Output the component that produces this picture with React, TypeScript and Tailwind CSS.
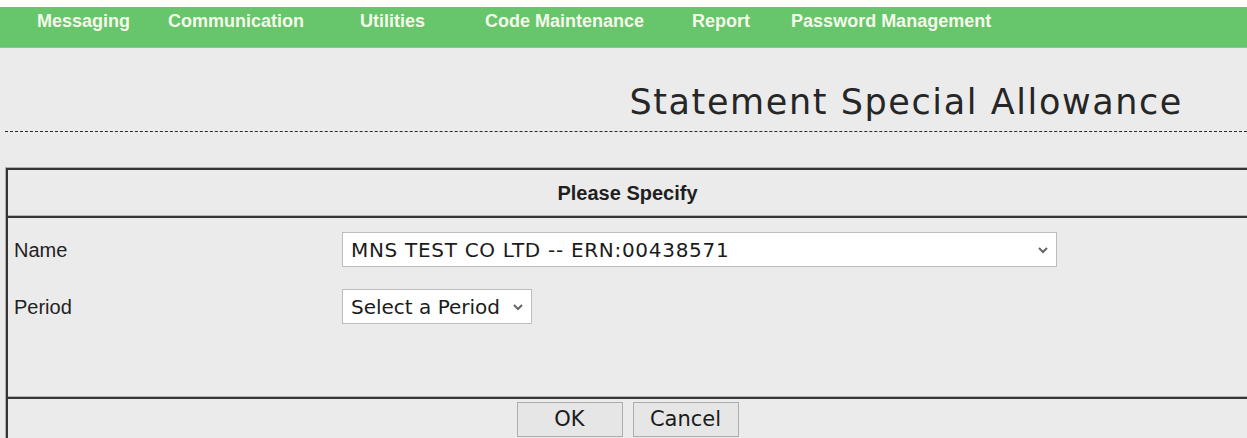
import React from "react";

const navItems: { label: string; ml: string }[] = [
  { label: "Messaging", ml: "ml-[37px]" },
  { label: "Communication", ml: "ml-[38px]" },
  { label: "Utilities", ml: "ml-[56px]" },
  { label: "Code Maintenance", ml: "ml-[60px]" },
  { label: "Report", ml: "ml-[48px]" },
  { label: "Password Management", ml: "ml-[41px]" },
];

function Chevron() {
  return (
    <svg width="12" height="8" viewBox="0 0 12 8" className="shrink-0">
      <polyline
        points="2,2 6,6 10,2"
        fill="none"
        stroke="#666"
        strokeWidth="2"
      />
    </svg>
  );
}

function Separator() {
  return (
    <div>
      <div className="h-px bg-[#b4b4b4]" />
      <div className="h-[2px] bg-[#353535]" />
    </div>
  );
}

export default function App() {
  return (
    <div className="h-[438px] w-full overflow-hidden bg-[#ebebeb] font-['Liberation_Sans',Arial,sans-serif]">
      <div className="h-[7px] bg-white" />
      <nav className="flex h-[41px] items-center border-b border-[#a7b59c] bg-[#67c56b] pb-[12px]">
        {navItems.map((item) => (
          <span
            key={item.label}
            className={`${item.ml} text-[18px] font-bold leading-none text-[#f4faea]`}
          >
            {item.label}
          </span>
        ))}
      </nav>

      <div className="flex justify-end pr-[64px] pt-[34px] pb-[9px]">
        <h1 className="font-['DejaVu_Sans',sans-serif] text-[35px] leading-[40px] tracking-[1.6px] text-[#262626]">
          Statement Special Allowance
        </h1>
      </div>
      <div className="ml-[5px] border-t border-dashed border-[#2a2a2a]" />

      <div className="ml-[5px] mt-[35px] border border-[#b0b0b0] border-r-0">
        <div className="border-l-2 border-t-2 border-[#353535]">
          <div className="flex h-[45px] items-center justify-center">
            <span className="text-[20px] font-bold text-[#1f1f1f]">Please Specify</span>
          </div>
          <Separator />

          <div className="flex h-[178px] flex-col gap-[22px] pt-[14px]">
            <div className="flex items-center">
              <span className="ml-[6px] w-[328px] text-[20px] text-[#222]">Name</span>
              <div className="flex h-[35px] w-[715px] items-center justify-between border border-[#bdbdbd] bg-white pl-[8px] pr-[7px] font-['DejaVu_Sans',sans-serif] text-[20px] tracking-[0.7px] text-[#1b1b1b]">
                <span>MNS TEST CO LTD -- ERN:00438571</span>
                <Chevron />
              </div>
            </div>
            <div className="flex items-center">
              <span className="ml-[6px] w-[328px] text-[20px] text-[#222]">Period</span>
              <div className="flex h-[35px] w-[190px] items-center justify-between border border-[#bdbdbd] bg-white pl-[8px] pr-[7px] font-['DejaVu_Sans',sans-serif] text-[20px] text-[#1b1b1b]">
                <span>Select a Period</span>
                <Chevron />
              </div>
            </div>
          </div>
          <Separator />

          <div className="flex h-[45px] justify-center gap-[10px] pt-[3px]">
            <button className="h-[35px] w-[106px] border border-[#adadad] bg-[#e6e6e6] font-['DejaVu_Sans',sans-serif] text-[21px] text-[#1b1b1b]">
              OK
            </button>
            <button className="h-[35px] w-[106px] border border-[#adadad] bg-[#e6e6e6] font-['DejaVu_Sans',sans-serif] text-[21px] text-[#1b1b1b]">
              Cancel
            </button>
          </div>
        </div>
      </div>
    </div>
  );
}
